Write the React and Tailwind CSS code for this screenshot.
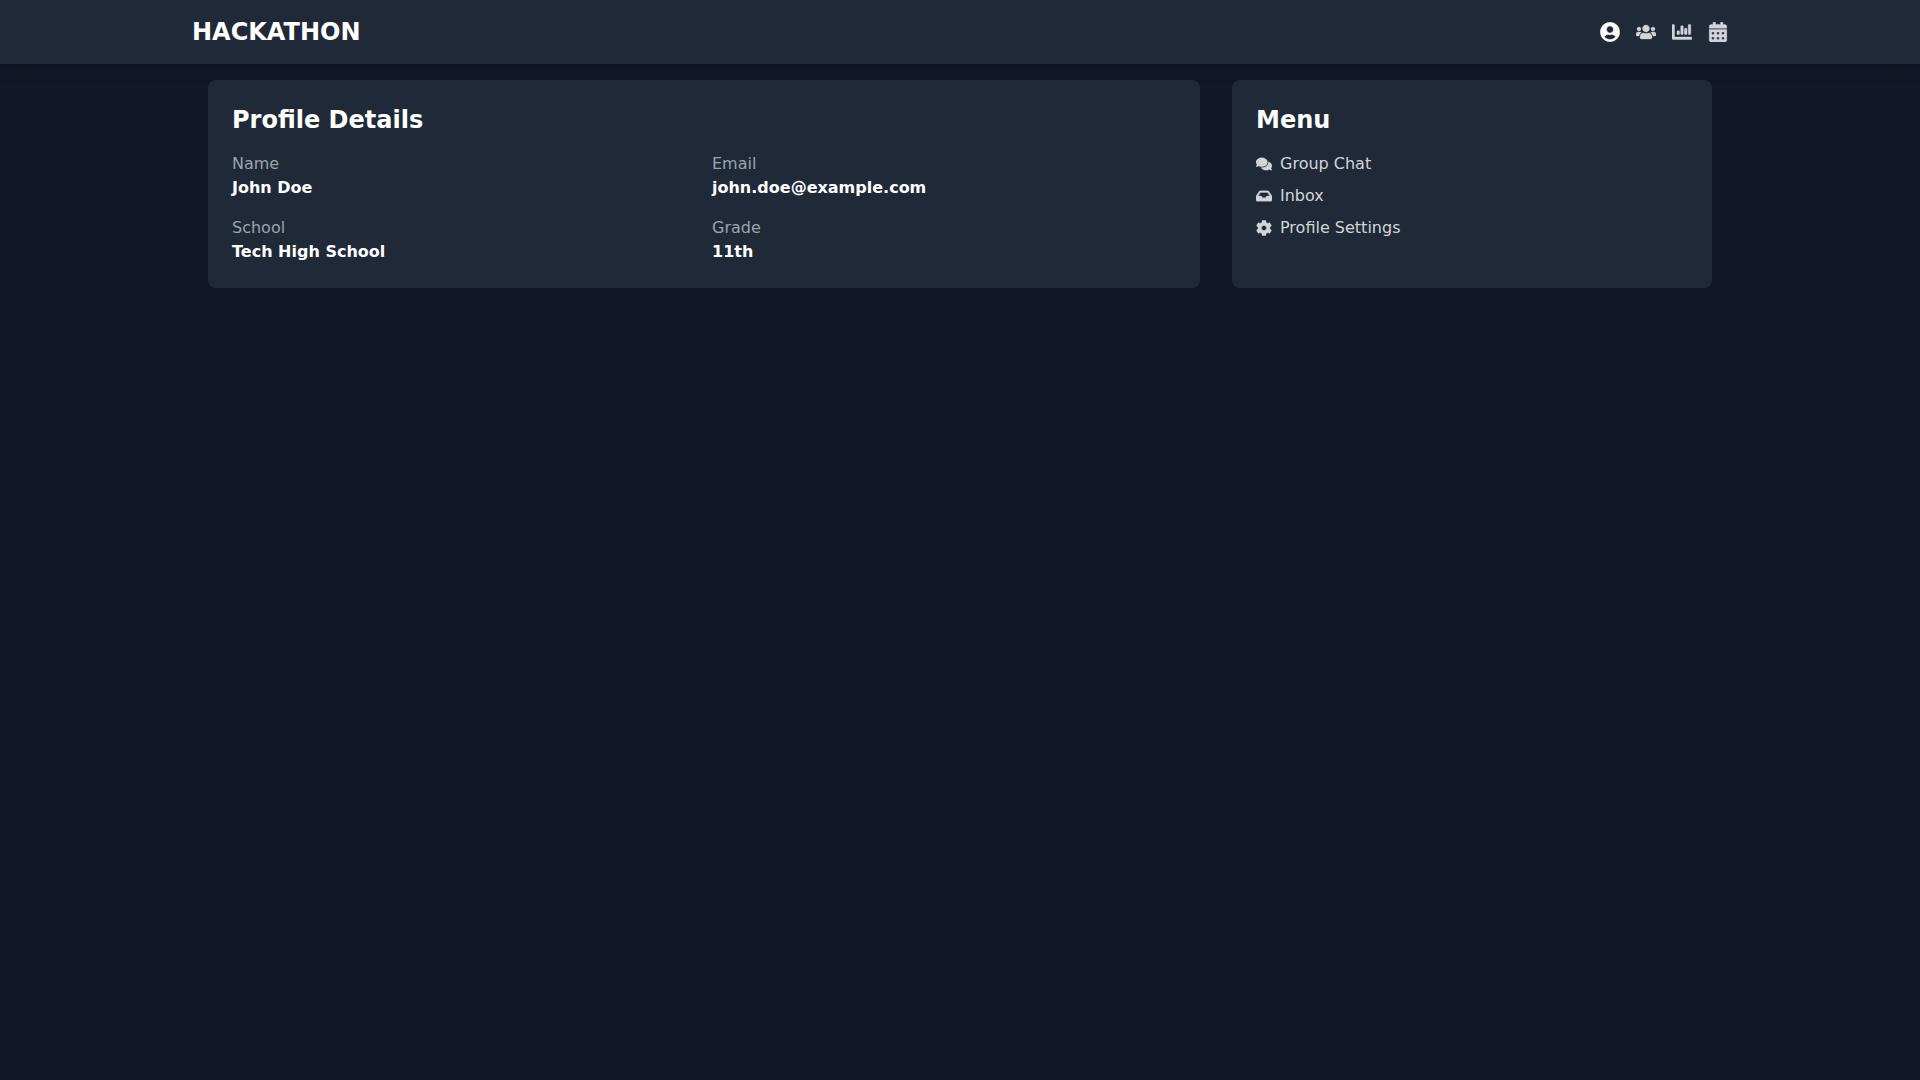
import React from 'react'
import {
  FaUserCircle,
  FaUsers,
  FaChartBar,
  FaCalendarAlt,
  FaComments,
  FaInbox,
  FaCog,
} from 'react-icons/fa'

const details = [
  { label: 'Name', value: 'John Doe' },
  { label: 'Email', value: 'john.doe@example.com' },
  { label: 'School', value: 'Tech High School' },
  { label: 'Grade', value: '11th' },
]

const menu = [
  { label: 'Group Chat', icon: FaComments },
  { label: 'Inbox', icon: FaInbox },
  { label: 'Profile Settings', icon: FaCog },
]

const App = () => {
  return (
    <div className="min-h-screen bg-[#111827] font-['DejaVu_Sans',sans-serif] text-white">
      <nav className="bg-[#1f2937] shadow-lg">
        <div className="mx-auto flex h-16 w-[1536px] items-center justify-between">
          <div className="text-2xl font-bold">HACKATHON</div>
          <div className="flex items-center gap-4">
            <FaUserCircle className="h-5 w-5 stroke-[10] text-white" />
            <FaUsers className="h-5 w-5 stroke-[10] text-[#d1d5db]" />
            <FaChartBar className="h-5 w-5 stroke-[10] text-[#d1d5db]" />
            <FaCalendarAlt className="h-5 w-5 stroke-[10] text-[#d1d5db]" />
          </div>
        </div>
      </nav>

      <main className="mx-auto w-[1536px] px-4 py-4">
        <div className="grid grid-cols-3 gap-8">
          <div className="col-span-2 rounded-lg bg-[#1f2937] p-6">
            <h2 className="mb-4 text-2xl font-bold">Profile Details</h2>
            <div className="grid grid-cols-2 gap-4">
              {details.map((item) => (
                <div key={item.label}>
                  <p className="text-[#9ca3af]">{item.label}</p>
                  <p className="font-semibold">{item.value}</p>
                </div>
              ))}
            </div>
          </div>

          <div className="rounded-lg bg-[#1f2937] p-6">
            <h2 className="mb-4 text-2xl font-bold">Menu</h2>
            <ul className="flex flex-col gap-2">
              {menu.map(({ label, icon: Icon }) => (
                <li key={label} className="flex items-center gap-2 text-[#d1d5db]">
                  <Icon className="h-4 w-4 stroke-[10]" />
                  <span>{label}</span>
                </li>
              ))}
            </ul>
          </div>
        </div>
      </main>
    </div>
  )
}

export default App
